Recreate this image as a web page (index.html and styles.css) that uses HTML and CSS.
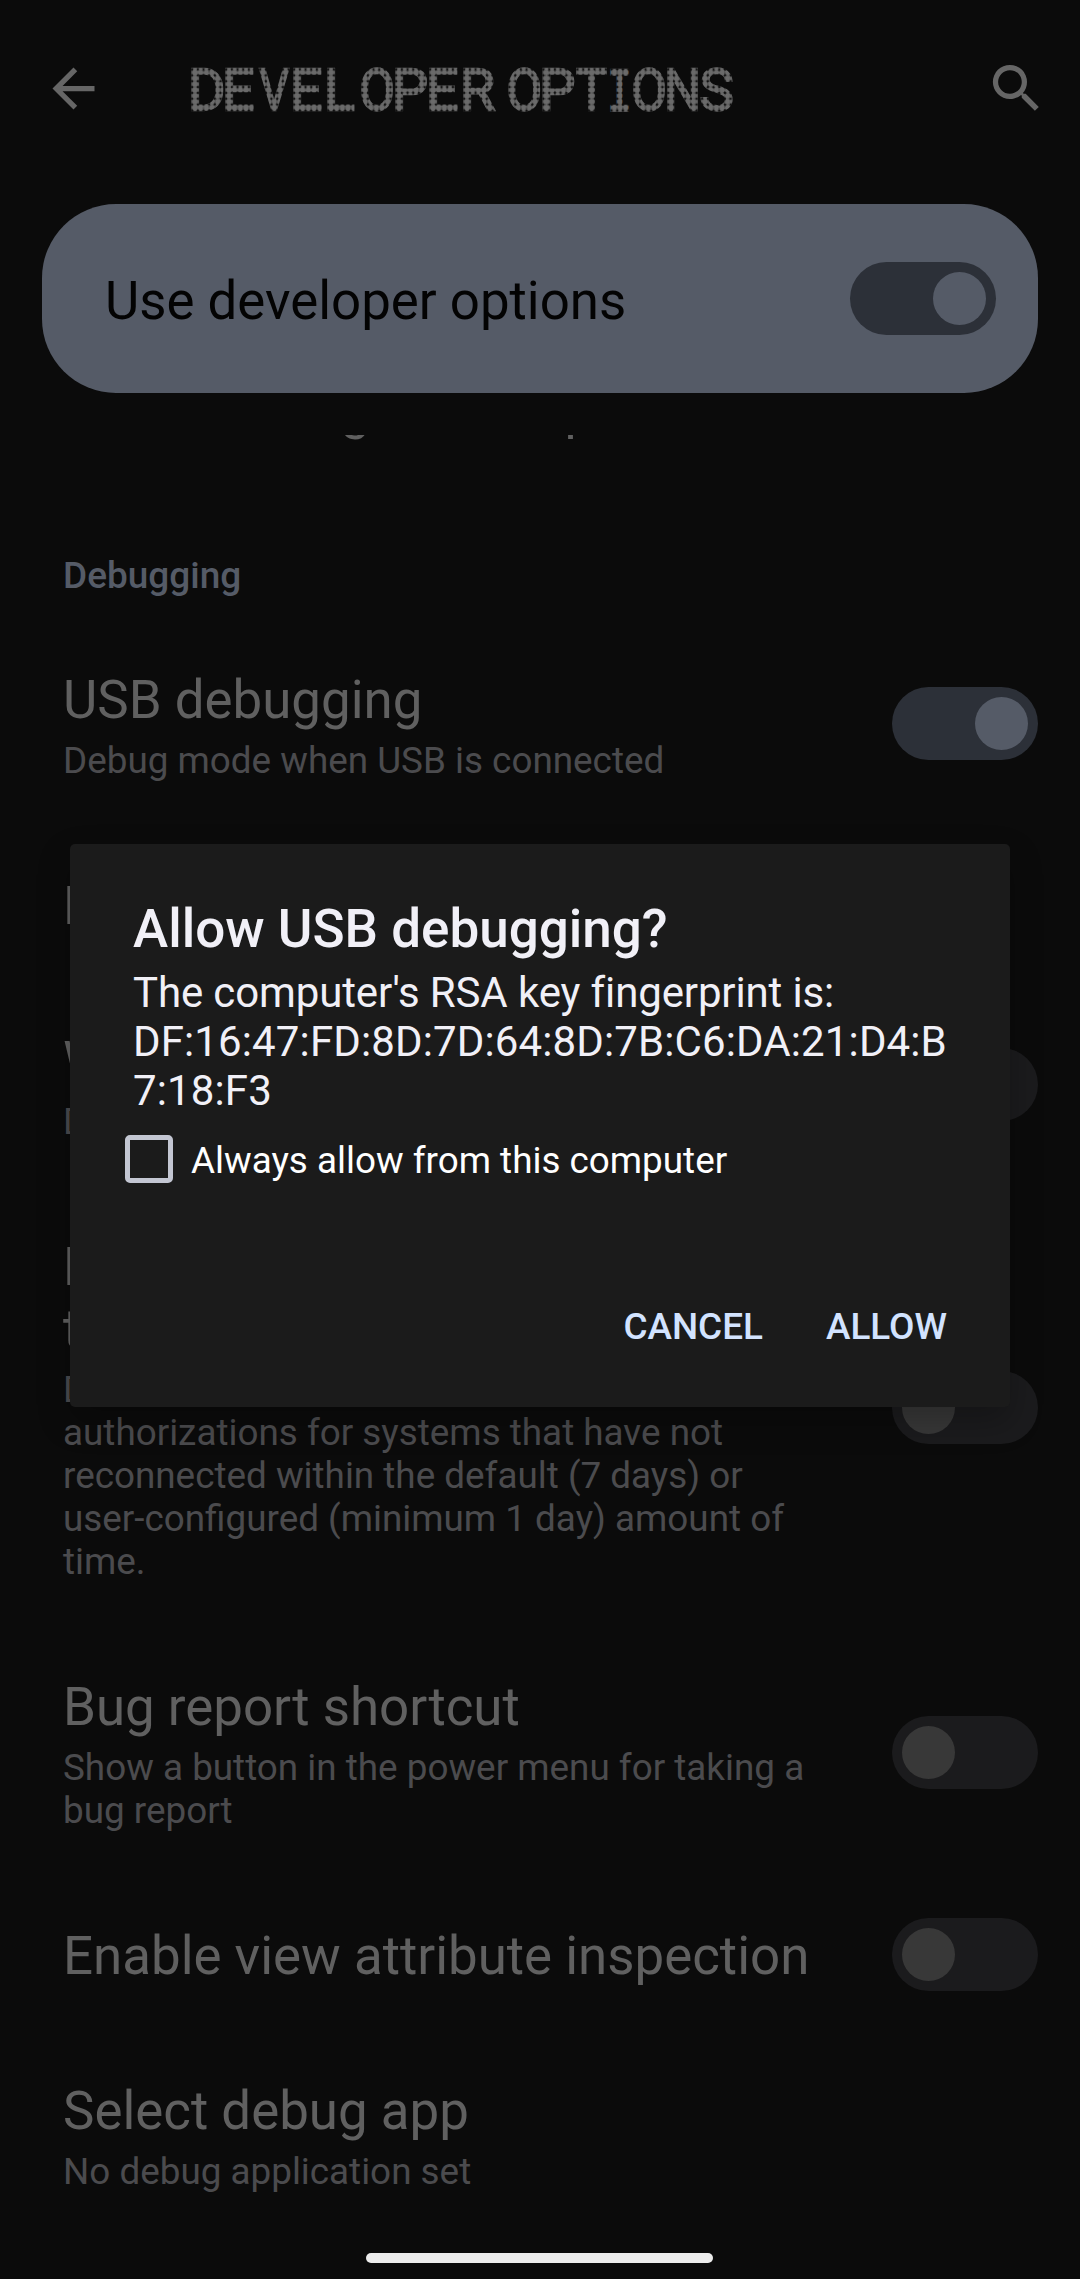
FILE: index.html
```html
<!DOCTYPE html>
<html lang="en">
<head>
<meta charset="utf-8">
<title>Developer options</title>
<link rel="stylesheet" href="styles.css">
</head>
<body>
<div class="screen">
  <header class="app-bar">
    <svg class="icon" viewBox="0 0 24 24"><path d="M20 11H7.83l5.59-5.59L12 4l-8 8 8 8 1.41-1.41L7.83 13H20v-2z"/></svg>
    <svg class="page-title" viewBox="180 38.5 700 100">
      <defs>
        <pattern id="dots" patternUnits="userSpaceOnUse" x="192.2" y="69.1" width="5.667" height="5.83">
          <ellipse cx="2.83" cy="2.91" rx="2.7" ry="2.8"/>
        </pattern>
      </defs>
      <text class="dotted" y="109.8"><tspan x="187.8">D</tspan><tspan x="221.7">E</tspan><tspan x="259.3" textLength="29.8" lengthAdjust="spacingAndGlyphs">V</tspan><tspan x="289.7">E</tspan><tspan x="323.7">L</tspan><tspan x="359.2" textLength="35.5" lengthAdjust="spacingAndGlyphs">O</tspan><tspan x="391.7">P</tspan><tspan x="425.7">E</tspan><tspan x="459.7">R</tspan> <tspan x="506.5" textLength="35.5" lengthAdjust="spacingAndGlyphs">O</tspan><tspan x="539">P</tspan><tspan x="576" textLength="31" lengthAdjust="spacingAndGlyphs">T</tspan><tspan class="slab" x="607.3" textLength="24.5" lengthAdjust="spacingAndGlyphs">I</tspan><tspan x="631.2" textLength="35.5" lengthAdjust="spacingAndGlyphs">O</tspan><tspan x="664" textLength="37.1" lengthAdjust="spacingAndGlyphs">N</tspan><tspan x="699.6">S</tspan></text>
    </svg>
    <svg class="icon" viewBox="0 0 24 24"><path d="M15.5 14h-.79l-.28-.27A6.471 6.471 0 0 0 16 9.5 6.5 6.5 0 1 0 9.5 16c1.61 0 3.09-.59 4.23-1.57l.27.28v.79l5 4.99L20.49 19l-4.99-5zm-6 0C7.01 14 5 11.99 5 9.5S7.01 5 9.5 5 14 7.01 14 9.5 11.99 14 9.5 14z"/></svg>
  </header>

  <section class="master">
    <span class="master-label">Use developer options</span>
    <span class="switch on"></span>
  </section>

  <main class="scroller">
    <div class="list">
      <div class="row"><div class="text"><div class="title">Quick settings developer tiles</div></div></div>
      <h2 class="category">Debugging</h2>
      <div class="row">
        <div class="text"><div class="title">USB debugging</div><div class="summary">Debug mode when USB is connected</div></div>
        <span class="switch on"></span>
      </div>
      <div class="row"><div class="text"><div class="title">Revoke USB debugging authorizations</div></div></div>
      <div class="row">
        <div class="text"><div class="title">Wireless debugging</div><div class="summary">Debug mode when Wi‑Fi is connected</div></div>
        <span class="switch"></span>
      </div>
      <div class="row">
        <div class="text"><div class="title">Disable adb authorization<br>timeout</div><div class="summary">Disable automatic revocation of adb<br>authorizations for systems that have not<br>reconnected within the default (7 days) or<br>user-configured (minimum 1 day) amount of<br>time.</div></div>
        <span class="switch"></span>
      </div>
      <div class="row">
        <div class="text"><div class="title">Bug report shortcut</div><div class="summary">Show a button in the power menu for taking a<br>bug report</div></div>
        <span class="switch"></span>
      </div>
      <div class="row">
        <div class="text"><div class="title">Enable view attribute inspection</div></div>
        <span class="switch"></span>
      </div>
      <div class="row"><div class="text"><div class="title">Select debug app</div><div class="summary">No debug application set</div></div></div>
    </div>
  </main>

  <div class="dialog" role="dialog">
    <h2 class="dialog-title">Allow USB debugging?</h2>
    <p class="message">The computer's RSA key fingerprint is:<br><span class="key">DF:16:47:FD:8D:7D:64:8D:7B:C6:DA:21:D4:B<br>7:18:F3</span></p>
    <label class="check"><span class="box"></span><span class="check-label">Always allow from this computer</span></label>
    <div class="actions"><span>CANCEL</span><span>ALLOW</span></div>
  </div>
  <div class="home-bar"></div>
</div>
</body>
</html>
```

FILE: styles.css
```css
* { box-sizing: border-box; margin: 0; padding: 0; }

body { background: #0b0b0b; }

.screen {
  position: relative;
  display: flex;
  flex-direction: column;
  width: 1080px;
  height: 2279px;
  overflow: hidden;
  background: #0b0b0b;
  font-family: Roboto, "Noto Sans", sans-serif;
  white-space: nowrap;
}

.app-bar {
  display: flex;
  align-items: center;
  height: 177px;
  padding: 0 32px 0 42px;
}
.icon { width: 63px; height: 63px; fill: #666; flex: none; }

/* dotted lettering: the text is filled with a grid of round dots */
.page-title { width: 700px; height: 100px; margin: 0 105px 0 75px; flex: none; }
.page-title ellipse { fill: #6a6a6a; }
.dotted {
  font-family: Roboto, sans-serif;
  font-size: 57.4px;
  fill: url(#dots);
  stroke: url(#dots);
  stroke-width: 2.4px;
}
.slab { font-family: "DejaVu Sans Mono", monospace; font-size: 56px; }

.master {
  display: flex;
  align-items: center;
  justify-content: space-between;
  height: 189px;
  margin: 27px 42px 0;
  padding: 0 42px 0 63px;
  border-radius: 74px;
  background: #555b67;
}
.master-label { font-size: 52.8px; line-height: 62px; color: #030303; padding-top: 5px; }

.switch {
  flex: none;
  display: flex;
  align-items: center;
  width: 146px;
  height: 73px;
  padding: 0 10px;
  border-radius: 37px;
  background: #1b1b1d;
}
.switch::before {
  content: "";
  width: 53px;
  height: 53px;
  border-radius: 50%;
  background: #383838;
}
.switch.on { justify-content: flex-end; background: #2c3038; }
.switch.on::before { background: #555b67; }

.scroller { flex: 1; margin-top: 42px; overflow: hidden; }
.list { margin-top: -100px; }

.row {
  display: flex;
  align-items: center;
  justify-content: space-between;
  padding: 44px 42px 49px 63px;
}
.row .switch { margin: -20px 0 -16px; }
.title { font-size: 52.85px; line-height: 62px; color: #606060; }
.summary { margin-top: 8px; font-size: 36.85px; line-height: 43px; color: #4b4b4e; }
.category {
  padding: 64px 63px 28px;
  font-size: 37px;
  font-weight: 500;
  line-height: 43px;
  color: #555b67;
}

.dialog {
  position: absolute;
  left: 70px;
  top: 844px;
  width: 940px;
  height: 563px;
  padding: 54px 63px 0;
  border-radius: 5px;
  background: #1b1b1b;
  box-shadow: 0 14px 32px rgba(0, 0, 0, 0.25);
}
.dialog-title { font-size: 53px; font-weight: 500; line-height: 62px; color: #f1f0f7; }
.message { margin-top: 8px; font-size: 42px; line-height: 49px; color: #f1f0f7; letter-spacing: -0.13px; }
.key { letter-spacing: 0.13px; }
.check {
  display: flex;
  align-items: center;
  gap: 18px;
  height: 48px;
  margin: 20px 0 0 -8px;
  font-size: 36.85px;
  color: #fff;
}
.check-label { padding-top: 2px; }
.box { width: 48px; height: 48px; border: 5px solid #c3c6d2; border-radius: 5px; }
.actions {
  display: flex;
  justify-content: flex-end;
  gap: 63px;
  margin-top: 122px;
  font-size: 36.9px;
  font-weight: 500;
  line-height: 43px;
  color: #d2e3ff;
}

.home-bar {
  position: absolute;
  left: 366px;
  top: 2253px;
  width: 347px;
  height: 10px;
  border-radius: 5px;
  background: #ececec;
}
```
